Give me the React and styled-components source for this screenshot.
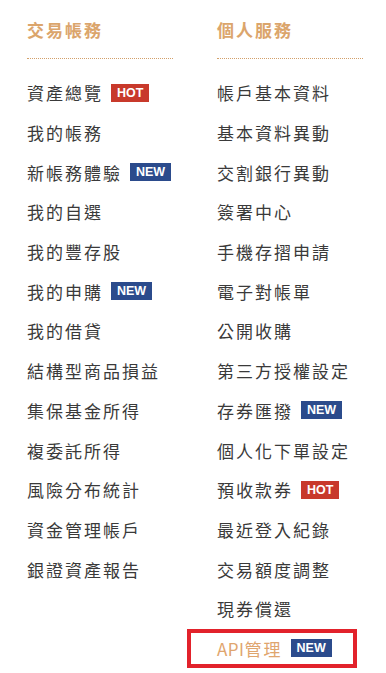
import React from "react";
import styled, { createGlobalStyle } from "styled-components";

const Global = createGlobalStyle`
  html, body { margin: 0; padding: 0; background: #fff; }
  body { font-family: "Noto Sans CJK TC", "Noto Sans", sans-serif; }
`;

const Page = styled.div`
  display: flex;
  gap: 44px;
  padding: 17px 0 0 27px;
  width: 386px;
  height: 673px;
  box-sizing: border-box;
  overflow: hidden;
`;

const Column = styled.section`
  width: 146px;
  display: flex;
  flex-direction: column;
`;

const Heading = styled.h3`
  margin: 0;
  font-size: 17px;
  font-weight: 700;
  line-height: 26px;
  letter-spacing: 2px;
  color: #dba56c;
  padding-bottom: 15px;
  border-bottom: 1px dotted #d3a06a;
`;

const List = styled.ul`
  list-style: none;
  margin: 0;
  padding: 14px 0 0 0;
`;

const Item = styled.li`
  display: flex;
  align-items: center;
  height: 39.7px;
  box-sizing: border-box;
  white-space: nowrap;
  font-size: 17px;
  letter-spacing: 2px;
  color: ${(p) => (p.$active ? "#dfa56e" : "#3a3a3a")};
  ${(p) =>
    p.$highlight &&
    `
    margin-left: -30px;
    width: 170px;
    padding-left: 26px;
    border: 4px solid #e2222b;
  `}
`;

const Latin = styled.span`
  letter-spacing: 0.5px;
`;

const Badge = styled.span`
  display: inline-flex;
  align-items: center;
  justify-content: center;
  height: 18px;
  padding: 0 6px;
  margin-left: 8px;
  font-family: "Liberation Sans", Arial, sans-serif;
  font-weight: 700;
  font-size: 12.5px;
  letter-spacing: 0;
  color: #fff;
  background: ${(p) => (p.$type === "hot" ? "#c8392b" : "#2b4b8c")};
`;

const left = [
  ["資產總覽", "hot"],
  ["我的帳務"],
  ["新帳務體驗", "new"],
  ["我的自選"],
  ["我的豐存股"],
  ["我的申購", "new"],
  ["我的借貸"],
  ["結構型商品損益"],
  ["集保基金所得"],
  ["複委託所得"],
  ["風險分布統計"],
  ["資金管理帳戶"],
  ["銀證資產報告"],
];

const right = [
  ["帳戶基本資料"],
  ["基本資料異動"],
  ["交割銀行異動"],
  ["簽署中心"],
  ["手機存摺申請"],
  ["電子對帳單"],
  ["公開收購"],
  ["第三方授權設定"],
  ["存券匯撥", "new"],
  ["個人化下單設定"],
  ["預收款券", "hot"],
  ["最近登入紀錄"],
  ["交易額度調整"],
  ["現券償還"],
  [["API", "管理"], "new", true],
];

const renderItems = (items) =>
  items.map(([label, badge, active]) => {
    const key = Array.isArray(label) ? label.join("") : label;
    return (
      <Item key={key} $active={active} $highlight={active}>
        {Array.isArray(label) ? (
          <>
            <Latin>{label[0]}</Latin>
            {label[1]}
          </>
        ) : (
          label
        )}
        {badge && <Badge $type={badge}>{badge.toUpperCase()}</Badge>}
      </Item>
    );
  });

export default function App() {
  return (
    <>
      <Global />
      <Page>
        <Column>
          <Heading>交易帳務</Heading>
          <List>{renderItems(left)}</List>
        </Column>
        <Column>
          <Heading>個人服務</Heading>
          <List>{renderItems(right)}</List>
        </Column>
      </Page>
    </>
  );
}
